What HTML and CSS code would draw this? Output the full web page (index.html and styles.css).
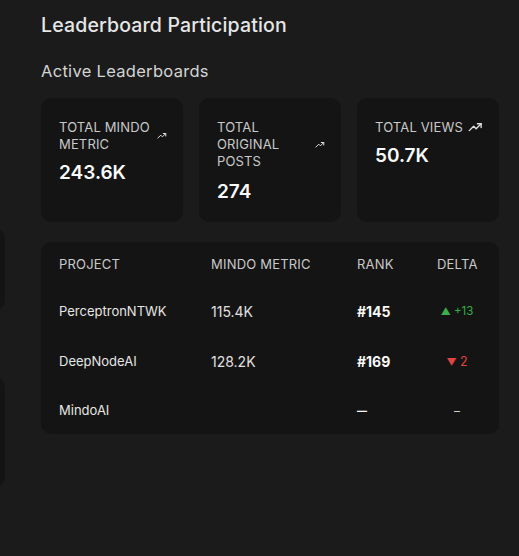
FILE: index.html
```html
<!DOCTYPE html>
<html>
<head>
<meta charset="utf-8">
<link rel="stylesheet" href="styles.css">
</head>
<body>
<div class="page">
  <aside class="side">
    <div class="side-card one"></div>
    <div class="side-card two"></div>
  </aside>
  <main class="main">
    <h1 class="title">Leaderboard Participation</h1>
    <h2 class="subtitle">Active Leaderboards</h2>
    <section class="stats">
      <div class="stat">
        <div class="stat-head">
          <span class="stat-label">Total&nbsp;Mindo Metric</span>
          <svg class="trend small" viewBox="0 0 24 24"><polyline points="2 17 9 10 13 14 21 6"/><polyline points="15 6 21 6 21 12"/></svg>
        </div>
        <div class="stat-value">243.6K</div>
      </div>
      <div class="stat">
        <div class="stat-head">
          <span class="stat-label">Total Original Posts</span>
          <svg class="trend small" viewBox="0 0 24 24"><polyline points="2 17 9 10 13 14 21 6"/><polyline points="15 6 21 6 21 12"/></svg>
        </div>
        <div class="stat-value">274</div>
      </div>
      <div class="stat">
        <div class="stat-head">
          <span class="stat-label">Total&nbsp;Views</span>
          <svg class="trend big" viewBox="0 0 24 24"><polyline points="2 17 9 10 13 14 21 6"/><polyline points="15 6 21 6 21 12"/></svg>
        </div>
        <div class="stat-value">50.7K</div>
      </div>
    </section>
    <section class="table">
      <div class="row head">
        <span>Project</span>
        <span>Mindo Metric</span>
        <span>Rank</span>
        <span class="delta">Delta</span>
      </div>
      <div class="row">
        <span class="name">PerceptronNTWK</span>
        <span class="metric">115.4K</span>
        <span class="rank">#145</span>
        <span class="delta up"><small>▲</small> +13</span>
      </div>
      <div class="row">
        <span class="name">DeepNodeAI</span>
        <span class="metric">128.2K</span>
        <span class="rank">#169</span>
        <span class="delta down"><small>▼</small> 2</span>
      </div>
      <div class="row last">
        <span class="name">MindoAI</span>
        <span class="metric"></span>
        <span class="rank dash">—</span>
        <span class="delta none">–</span>
      </div>
    </section>
  </main>
</div>
</body>
</html>
```
FILE: styles.css
```css
* { box-sizing: border-box; }
html, body {
  margin: 0;
  padding: 0;
  background: #1b1b1b;
  height: 100%;
  overflow: hidden;
}
body {
  font-family: Inter, "Noto Sans", "Liberation Sans", sans-serif;
  color: #e8e8e8;
}
.page {
  display: flex;
  align-items: flex-start;
}
.side {
  width: 200px;
  margin-left: -195px;
  padding-top: 228px;
  display: flex;
  flex-direction: column;
  gap: 67px;
  flex-shrink: 0;
}
.side-card {
  background: #141414;
  border-radius: 10px;
}
.side-card.one { height: 82px; }
.side-card.two { height: 110px; }
.main {
  margin-left: 36px;
  width: 458px;
  flex-shrink: 0;
}
.title {
  margin: 13px 0 0;
  font-size: 19.5px;
  line-height: 24px;
  font-weight: 500;
  letter-spacing: 0.15px;
  color: #e6e6e6;
}
.subtitle {
  margin: 24px 0 0;
  font-size: 16.5px;
  line-height: 20px;
  font-weight: 400;
  letter-spacing: 0.3px;
  color: #d4d4d4;
}
.stats {
  margin-top: 17px;
  display: grid;
  grid-template-columns: repeat(3, 142px);
  column-gap: 16px;
}
.stat {
  background: #141414;
  border-radius: 10px;
  height: 124px;
  padding: 21px 16px 0 18px;
}
.stat-head {
  display: flex;
  align-items: center;
  gap: 5px;
}
.stat-label {
  font-size: 13px;
  line-height: 17px;
  text-transform: uppercase;
  color: #c9c9c9;
  letter-spacing: 0.15px;
}
.stat:nth-child(2) .stat-label { max-width: 84px; }
.stat:nth-child(2) .stat-head { gap: 14px; }
.trend {
  fill: none;
  stroke: #e0e0e0;
  stroke-width: 2.4;
  stroke-linecap: round;
  stroke-linejoin: round;
  flex-shrink: 0;
}
.trend.small { width: 10px; height: 10px; }
.trend.big { width: 15px; height: 15px; stroke-width: 2.2; }
.stat-value {
  margin-top: 8px;
  font-size: 19px;
  line-height: 24px;
  font-weight: 600;
  color: #fafafa;
}
.stat:nth-child(2) .stat-value { margin-top: 10px; }
.table {
  margin-top: 20px;
  background: #141414;
  border-radius: 10px;
  padding: 0 18px;
}
.row {
  display: grid;
  grid-template-columns: 152px 146px 80px 40px;
  align-items: center;
  height: 50px;
}
.row.head {
  height: 44px;
  font-size: 13px;
  text-transform: uppercase;
  color: #c9c9c9;
  letter-spacing: 0.2px;
}
.row.last { height: 48px; }
.name {
  font-size: 13px;
  color: #e6e6e6;
}
.metric {
  font-size: 14px;
  color: #e0e0e0;
}
.rank {
  font-size: 14px;
  font-weight: 700;
  color: #fafafa;
}
.rank.dash {
  font-size: 10px;
}
.delta {
  text-align: center;
  white-space: nowrap;
}
.delta small {
  font-size: 10px;
}
.delta.up {
  color: #35b04a;
  font-size: 11.5px;
}
.delta.down {
  color: #e0443f;
  font-size: 12.5px;
}
.delta.none {
  color: #cfcfcf;
  font-size: 12px;
}
```
